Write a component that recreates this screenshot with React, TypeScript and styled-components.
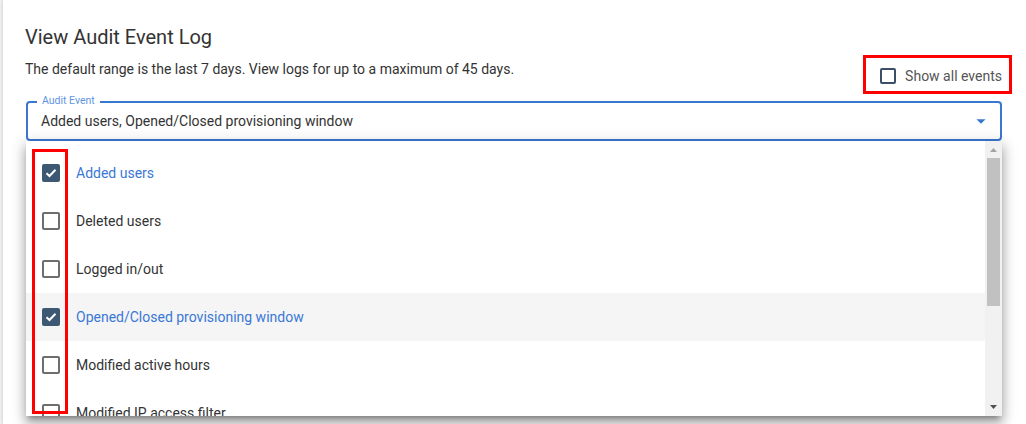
import React from "react";
import styled, { createGlobalStyle } from "styled-components";

const GlobalStyle = createGlobalStyle`
  html, body { margin: 0; padding: 0; }
  body {
    background: #f2f2f2;
    font-family: Roboto, "Liberation Sans", Arial, sans-serif;
    color: #333;
    overflow: hidden;
  }
`;

const Page = styled.div`
  position: relative;
  width: 1026px;
  height: 424px;
  overflow: hidden;
`;

const Card = styled.section`
  margin-left: 3px;
  height: 424px;
  background: #fff;
  box-shadow: -1px 0 3px rgba(0, 0, 0, 0.12);
  padding: 25px 24px 0 22px;
  box-sizing: border-box;
`;

const Title = styled.h1`
  margin: 0 0 10px;
  font-size: 20px;
  line-height: 24px;
  font-weight: 400;
  color: #333;
`;

const HeaderRow = styled.div`
  display: flex;
  justify-content: space-between;
  align-items: flex-start;
  margin-bottom: 15px;
`;

const Subtitle = styled.p`
  margin: 0;
  font-size: 14px;
  line-height: 20px;
  color: #333;
`;

const ShowAll = styled.label`
  display: flex;
  align-items: center;
  gap: 9px;
  margin-top: 7px;
  font-size: 14px;
  line-height: 20px;
  color: #555;
`;

const Field = styled.div`
  position: relative;
  margin-left: 1px;
  display: flex;
  align-items: center;
  border: 2px solid #3a77cf;
  border-radius: 4px;
  height: 40px;
  box-sizing: border-box;
`;

const FieldLabel = styled.span`
  position: absolute;
  left: 9px;
  top: -9px;
  padding: 0 5px;
  background: #fff;
  font-size: 10.5px;
  line-height: 14px;
  color: #5f95e3;
`;

const FieldValue = styled.div`
  flex: 1;
  padding-left: 13px;
  font-size: 14px;
  line-height: 20px;
  color: #333;
`;

const ArrowIcon = styled.svg`
  width: 22px;
  height: 22px;
  margin-right: 8px;
  fill: #3a77cf;
`;

const Menu = styled.div`
  position: absolute;
  left: 26px;
  top: 141px;
  width: 976px;
  height: 275px;
  display: flex;
  background: #fff;
  box-shadow: 0 5px 5px -3px rgba(0, 0, 0, 0.3), 0 8px 10px 1px rgba(0, 0, 0, 0.2),
    0 3px 14px 2px rgba(0, 0, 0, 0.16);
  overflow: hidden;
`;

const List = styled.ul`
  flex: 1;
  margin: 0;
  padding: 8px 0 0;
  list-style: none;
  overflow: hidden;
`;

const Item = styled.li<{ $hover?: boolean; $checked?: boolean }>`
  display: flex;
  align-items: center;
  gap: 16px;
  height: 48px;
  padding-left: 16px;
  background: ${(p) => (p.$hover ? "#f5f5f5" : "transparent")};
  font-size: 14px;
  line-height: 20px;
  color: ${(p) => (p.$checked ? "#3a78d6" : "#333")};
  flex-shrink: 0;
`;

const Box = styled.span<{ $checked?: boolean; $size: number; $color: string }>`
  display: inline-flex;
  align-items: center;
  justify-content: center;
  box-sizing: border-box;
  width: ${(p) => p.$size}px;
  height: ${(p) => p.$size}px;
  border-radius: 2px;
  flex-shrink: 0;
  background: ${(p) => (p.$checked ? "#3d5873" : "transparent")};
  border: ${(p) => (p.$checked ? "none" : `2px solid ${p.$color}`)};
`;

const Scrollbar = styled.div`
  width: 17px;
  display: flex;
  flex-direction: column;
  align-items: center;
  background: #f1f1f1;
`;

const ScrollArrow = styled.svg<{ $dim?: boolean }>`
  width: 17px;
  height: 17px;
  flex-shrink: 0;
  fill: ${(p) => (p.$dim ? "#a3a3a3" : "#505050")};
`;

const Track = styled.div`
  flex: 1;
  width: 100%;
  display: flex;
  justify-content: center;
`;

const Thumb = styled.div`
  width: 13px;
  height: 148px;
  background: #c1c1c1;
`;

const Annotation = styled.div<{ $x: number; $y: number; $w: number; $h: number }>`
  position: absolute;
  left: ${(p) => p.$x}px;
  top: ${(p) => p.$y}px;
  width: ${(p) => p.$w}px;
  height: ${(p) => p.$h}px;
  border: 3px solid #ff0000;
  box-sizing: border-box;
  pointer-events: none;
`;

const Check = () => (
  <svg width="12" height="10" viewBox="0 0 12 10">
    <polyline points="1.5,5.2 4.5,8 10.5,1.8" fill="none" stroke="#fff" strokeWidth="2" />
  </svg>
);

const Checkbox = ({ checked, size = 18, color = "#6e6e6e" }: { checked?: boolean; size?: number; color?: string }) => (
  <Box $checked={checked} $size={size} $color={color}>
    {checked && <Check />}
  </Box>
);

const items = [
  { label: "Added users", checked: true },
  { label: "Deleted users" },
  { label: "Logged in/out" },
  { label: "Opened/Closed provisioning window", checked: true, hover: true },
  { label: "Modified active hours" },
  { label: "Modified IP access filter" },
];

export default function App() {
  return (
    <Page>
      <GlobalStyle />
      <Card>
        <Title>View Audit Event Log</Title>
        <HeaderRow>
          <Subtitle>The default range is the last 7 days. View logs for up to a maximum of 45 days.</Subtitle>
          <ShowAll>
            <Checkbox size={16} color="#3d4f66" />
            Show all events
          </ShowAll>
        </HeaderRow>
        <Field>
          <FieldLabel>Audit Event</FieldLabel>
          <FieldValue>Added users, Opened/Closed provisioning window</FieldValue>
          <ArrowIcon viewBox="0 0 24 24">
            <path d="M7 10l5 5 5-5z" />
          </ArrowIcon>
        </Field>
      </Card>
      <Menu>
        <List>
          {items.map((it) => (
            <Item key={it.label} $hover={it.hover} $checked={it.checked}>
              <Checkbox checked={it.checked} />
              {it.label}
            </Item>
          ))}
        </List>
        <Scrollbar>
          <ScrollArrow $dim viewBox="0 0 17 17">
            <path d="M5 11h7l-3.5-4z" />
          </ScrollArrow>
          <Track>
            <Thumb />
          </Track>
          <ScrollArrow viewBox="0 0 17 17">
            <path d="M5 6h7l-3.5 4z" />
          </ScrollArrow>
        </Scrollbar>
      </Menu>
      <Annotation $x={863} $y={55} $w={149} $h={39} />
      <Annotation $x={32} $y={149} $w={36} $h={265} />
    </Page>
  );
}
